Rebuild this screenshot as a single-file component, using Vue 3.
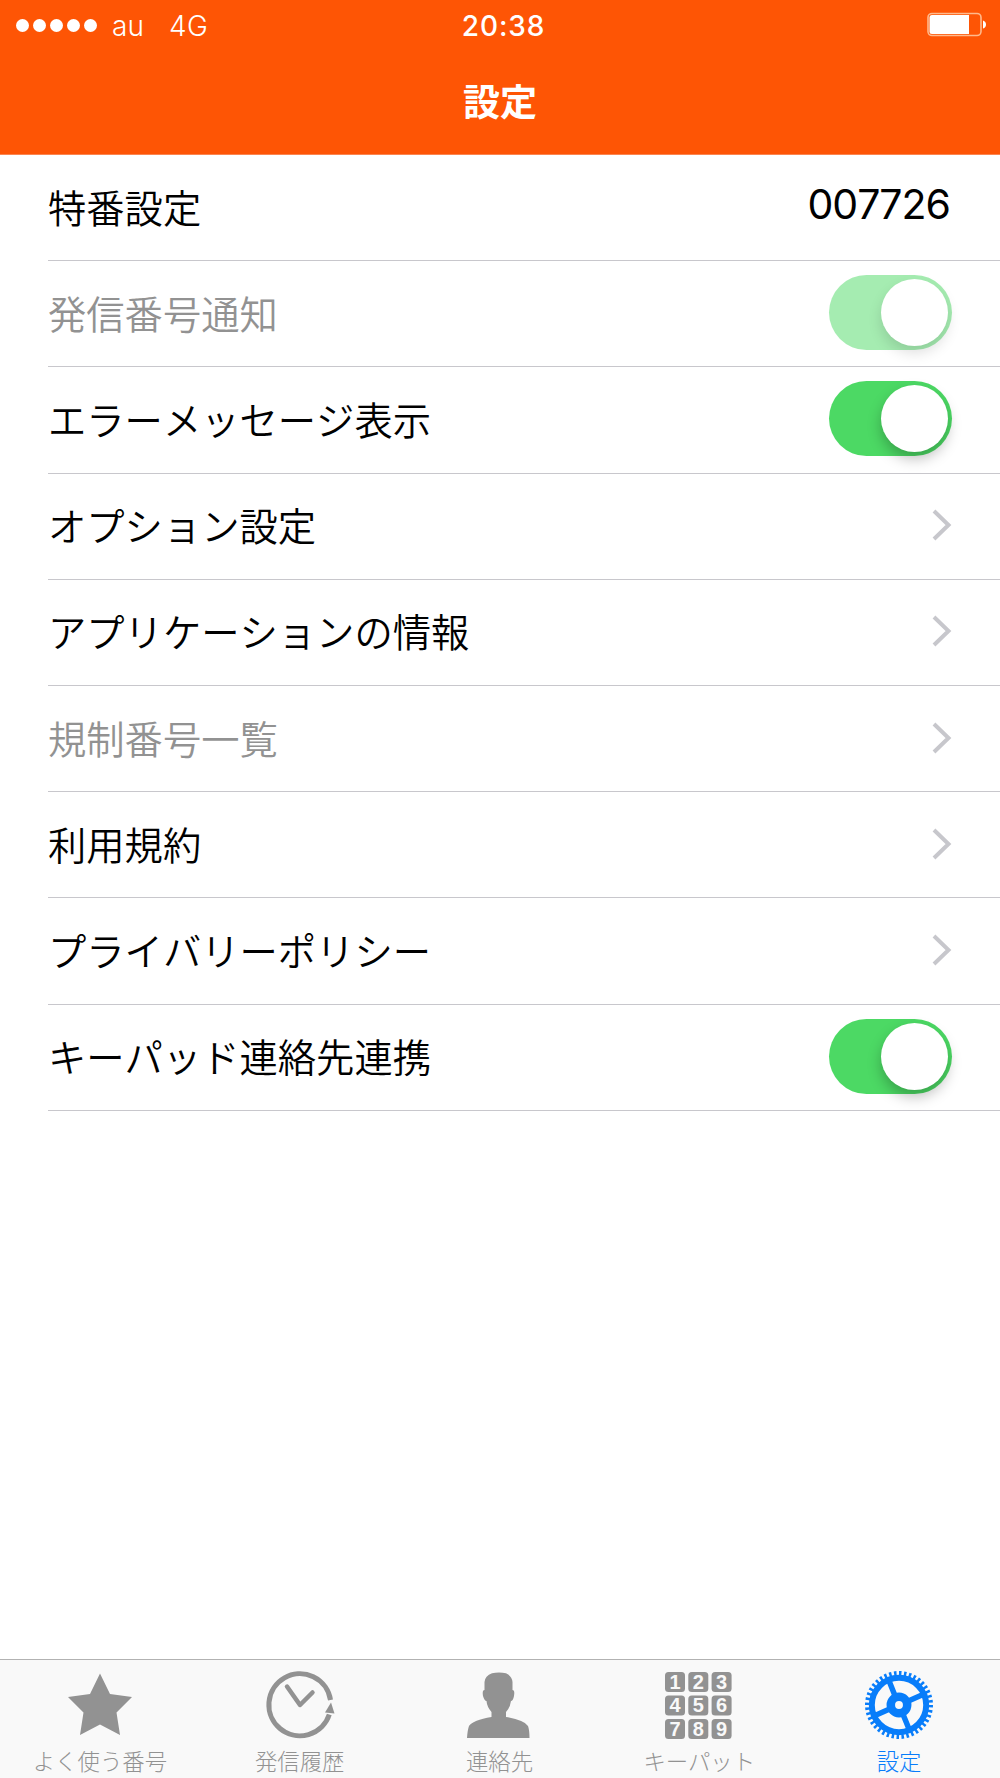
<script setup>
import { ref } from 'vue'

const linhas = ref([
  { texto: '特番設定', tipo: 'valor', valor: '007726' },
  { texto: '発信番号通知', tipo: 'switch', inativo: true },
  { texto: 'エラーメッセージ表示', tipo: 'switch' },
  { texto: 'オプション設定', tipo: 'link' },
  { texto: 'アプリケーションの情報', tipo: 'link' },
  { texto: '規制番号一覧', tipo: 'link', inativo: true },
  { texto: '利用規約', tipo: 'link' },
  { texto: 'プライバリーポリシー', tipo: 'link' },
  { texto: 'キーパッド連絡先連携', tipo: 'switch' }
])

const abas = [
  { id: 'star', texto: 'よく使う番号' },
  { id: 'clock', texto: '発信履歴' },
  { id: 'person', texto: '連絡先' },
  { id: 'keypad', texto: 'キーパット' },
  { id: 'gear', texto: '設定' }
]
const ativa = ref('gear')
</script>

<template>
  <div class="tela">
    <header class="topo">
      <div class="status">
        <div class="operadora">
          <span class="sinal"><i v-for="n in 5" :key="n"></i></span>
          <span class="au">au</span>
          <span class="rede">4G</span>
        </div>
        <span class="hora">20:38</span>
        <svg class="bateria" width="60" height="26" viewBox="0 0 60 26">
          <rect x="1" y="1.5" width="53" height="22" rx="4" fill="none" stroke="#ffb98c" stroke-width="1.6" />
          <path d="M5 3H42V22H5Q2.5 22 2.5 19.5V5.5Q2.5 3 5 3Z" fill="#fff" />
          <path d="M56 8.5Q59 9.5 59 12.5T56 16.5Z" fill="#fff" />
        </svg>
      </div>
      <h1>設定</h1>
    </header>

    <main class="lista">
      <div v-for="linha in linhas" :key="linha.texto" class="linha" :class="{ inativo: linha.inativo }">
        <span class="texto">{{ linha.texto }}</span>
        <span v-if="linha.tipo === 'valor'" class="valor">{{ linha.valor }}</span>
        <span v-else-if="linha.tipo === 'switch'" class="switch"><i></i></span>
        <svg v-else class="seta" width="20" height="32" viewBox="0 0 20 32">
          <path d="M2 2L16.5 16L2 30" fill="none" stroke="#c7c7cc" stroke-width="4" />
        </svg>
      </div>
    </main>

    <nav class="abas">
      <button v-for="aba in abas" :key="aba.id" class="aba" :class="{ ativa: aba.id === ativa }" @click="ativa = aba.id">
        <svg width="70" height="70" viewBox="0 0 70 70">
          <path
            v-if="aba.id === 'star'"
            d="M35 3.5L45 24L67 27L51.5 42.5L55 65L35 54.5L15 65L18.5 42.5L3 27L25 24Z"
            fill="currentColor"
          />
          <g v-else-if="aba.id === 'clock'" fill="none" stroke="currentColor">
            <path d="M65.5 30A31 31 0 1 0 64.3 44.5" stroke-width="5" />
            <path d="M22 16.5L35 35L47.5 22.5" stroke-width="4.5" stroke-linecap="round" stroke-linejoin="round" />
            <path d="M66 32.5L69.5 43.5L60 42.5Z" fill="currentColor" stroke="none" />
          </g>
          <path
            v-else-if="aba.id === 'person'"
            d="M28 3.3Q35 1.5 42 3.3Q48 6 48.5 12V20Q51 20 50 26Q49 31 47 31Q46 38 42 42V47Q60 50 64 56Q65.5 60 65.5 68H3Q3.5 60 5 56Q9 50 27.5 47V42Q23 37 22.5 31Q20.5 31 19 26Q18 20 20.5 20V12Q21 6 28 3.3Z"
            fill="currentColor"
          />
          <g v-else-if="aba.id === 'keypad'">
            <template v-for="n in 9" :key="n">
              <rect :x="1 + ((n - 1) % 3) * 23.3" :y="2 + Math.floor((n - 1) / 3) * 23.5" width="20" height="20" rx="3.5" fill="currentColor" />
              <text :x="11 + ((n - 1) % 3) * 23.3" :y="18.5 + Math.floor((n - 1) / 3) * 23.5" class="tecla">{{ n }}</text>
            </template>
          </g>
          <g v-else fill="none" stroke="currentColor">
            <circle cx="35" cy="35" r="27.2" stroke-width="6" />
            <circle cx="35" cy="35" r="31.5" stroke-width="5" pathLength="80" stroke-dasharray="1 1" />
            <circle cx="35" cy="35" r="8.2" stroke-width="8.5" />
            <path d="M30.5 24.5L25.5 12M45.5 30.5L59 24.5M39.5 45.5L45 59M24.5 39.5L11 45.5" stroke-width="5.5" />
          </g>
        </svg>
        <span>{{ aba.texto }}</span>
      </button>
    </nav>
  </div>
</template>

<style>
body {
  margin: 0;
}
</style>

<style scoped>
.tela {
  width: 1000px;
  height: 1778px;
  background: #fff;
  display: flex;
  flex-direction: column;
  overflow: hidden;
  font-family: Inter, 'Noto Sans CJK JP', sans-serif;
  font-kerning: none;
}

.topo {
  height: 155px;
  box-sizing: border-box;
  background: #fe5505;
  border-bottom: 1px solid #fb8550;
  color: #fff;
  flex-shrink: 0;
}

.status {
  height: 50px;
  display: grid;
  grid-template-columns: 1fr auto 1fr;
  align-items: center;
  padding: 0 13px 0 16px;
  font-size: 28px;
}

.operadora {
  display: flex;
  align-items: center;
  font-weight: 300;
}

.sinal {
  display: flex;
  gap: 4px;
}

.sinal i {
  width: 13px;
  height: 13px;
  border-radius: 50%;
  background: #fff;
}

.au {
  margin: 0 25px 0 15px;
  padding-top: 2px;
}

.rede {
  padding-top: 2px;
  letter-spacing: 0.5px;
}

.hora {
  font-weight: 500;
  letter-spacing: 0.9px;
  padding: 2px 0 0 4px;
}

.bateria {
  justify-self: end;
}

h1 {
  margin: 0;
  font-size: 37px;
  line-height: 54px;
  padding-top: 26px;
  font-weight: 700;
  text-align: center;
}

.lista {
  flex: 1;
  padding-left: 48px;
}

.linha {
  height: 106.2px;
  box-sizing: border-box;
  border-bottom: 1px solid #c8c7cc;
  padding-right: 48px;
  display: flex;
  align-items: center;
  justify-content: space-between;
}

.texto {
  font-size: 38.3px;
  font-weight: 350;
  line-height: 56px;
  padding-top: 2px;
  color: #000;
}

.inativo .texto {
  color: #929292;
}

.valor {
  font-size: 41px;
  line-height: 50px;
  letter-spacing: -1px;
  padding: 0 2px 8px 0;
}

.seta {
  margin-bottom: 2px;
}

.switch {
  width: 123px;
  height: 75px;
  box-sizing: border-box;
  border-radius: 38px;
  padding: 4px;
  margin-bottom: 2px;
  background: #4cd964;
  display: flex;
  justify-content: flex-end;
}

.switch i {
  width: 67px;
  height: 67px;
  border-radius: 50%;
  background: #fff;
  box-shadow: 0 7px 14px rgba(0, 0, 0, 0.25);
}

.inativo .switch {
  background: #a5ecb1;
}

.inativo .switch i {
  box-shadow: 0 7px 14px rgba(0, 0, 0, 0.13);
}

.abas {
  height: 119px;
  box-sizing: border-box;
  border-top: 1px solid #b2b2b2;
  background: #f9f9f9;
  display: grid;
  grid-template-columns: repeat(5, 1fr);
  padding-right: 1px;
}

.aba {
  border: none;
  background: none;
  padding: 10px 0 0;
  color: #929292;
  display: flex;
  flex-direction: column;
  align-items: center;
  font-family: inherit;
  font-size: 22.4px;
  font-weight: 300;
  line-height: 32px;
}

.aba span {
  margin-top: 6px;
  white-space: nowrap;
}

.ativa {
  color: #087dfa;
}

.tecla {
  font-family: 'Liberation Sans', sans-serif;
  font-size: 20px;
  font-weight: 700;
  fill: #f9f9f9;
  text-anchor: middle;
}
</style>
